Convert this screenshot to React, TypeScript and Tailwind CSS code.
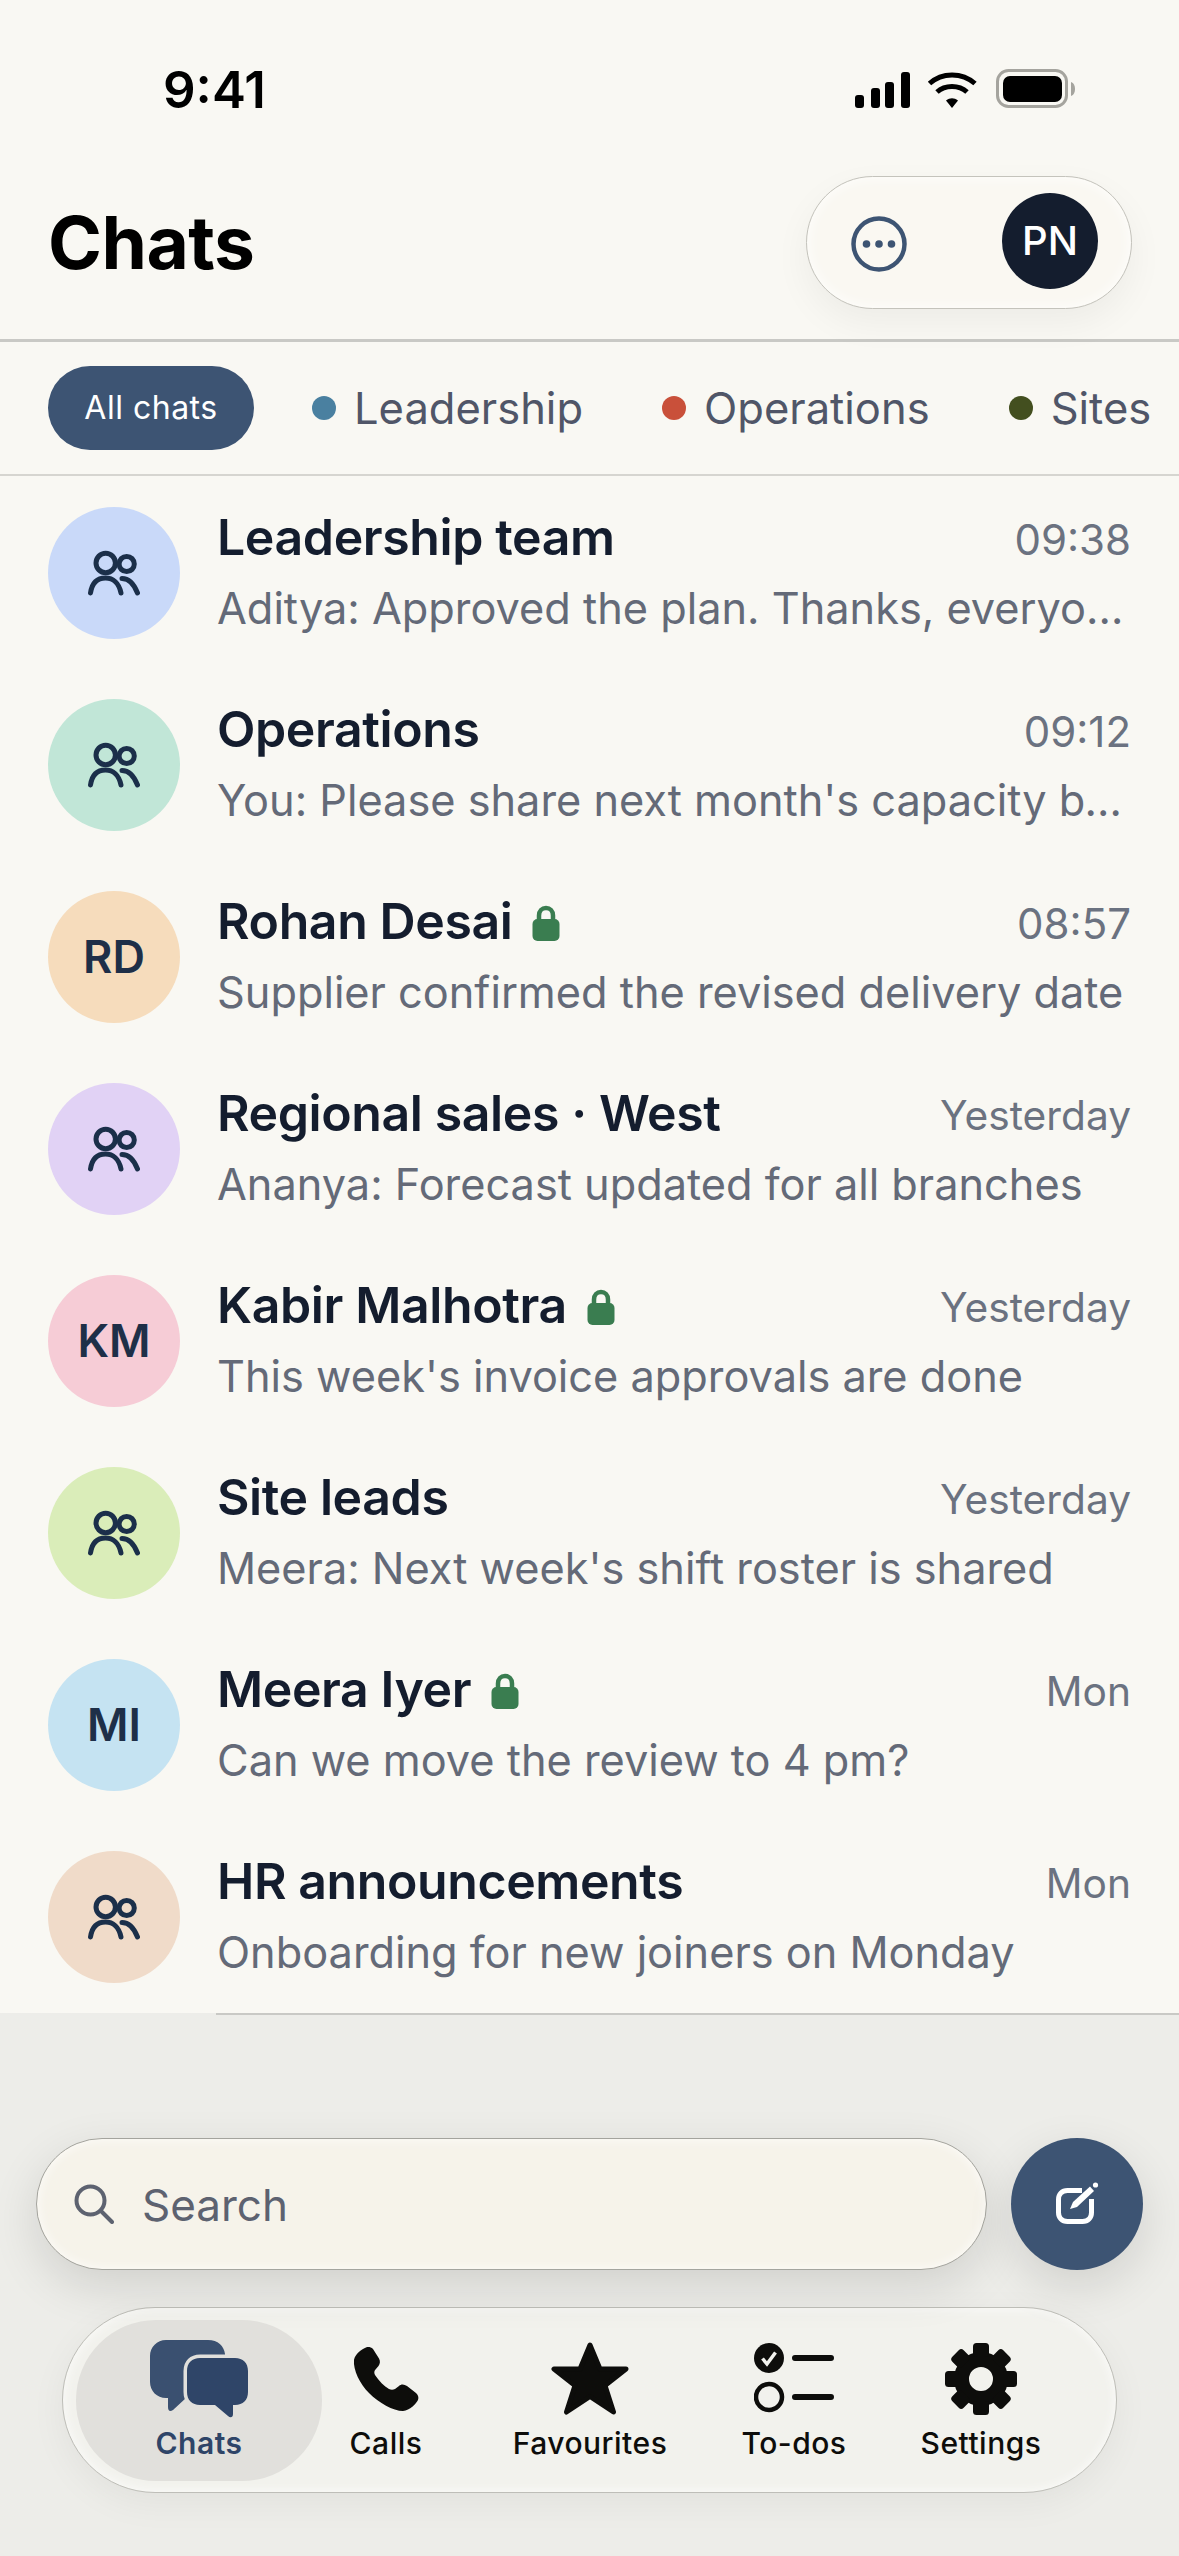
const peopleIcon = (
  <svg width="52" height="46" viewBox="1 1 52 46" fill="none" stroke="#1b2f4a" strokeWidth="5" strokeLinecap="round">
    <circle cx="18.7" cy="14" r="9.7" />
    <circle cx="39.7" cy="15" r="7.6" />
    <path d="M3.5 44C5 34 10 29 18.5 29C26 29 32 34 34 44" />
    <path d="M35 29.5C42 29.5 47 35 50.5 44" />
  </svg>
);

const chats = [
  { name: 'Leadership team', sub: 'Aditya: Approved the plan. Thanks, everyone for the update', time: '09:38', bg: 'bg-[#c9d9f9]' },
  { name: 'Operations', sub: "You: Please share next month's capacity by Friday please", time: '09:12', bg: 'bg-[#c1e6d7]' },
  { name: 'Rohan Desai', sub: 'Supplier confirmed the revised delivery date', time: '08:57', bg: 'bg-[#f6dcbc]', initials: 'RD', lock: true },
  { name: 'Regional sales · West', sub: 'Ananya: Forecast updated for all branches', time: 'Yesterday', bg: 'bg-[#e1d2f5]' },
  { name: 'Kabir Malhotra', sub: "This week's invoice approvals are done", time: 'Yesterday', bg: 'bg-[#f6ccd6]', initials: 'KM', lock: true },
  { name: 'Site leads', sub: "Meera: Next week's shift roster is shared", time: 'Yesterday', bg: 'bg-[#daedb9]' },
  { name: 'Meera Iyer', sub: 'Can we move the review to 4 pm?', time: 'Mon', bg: 'bg-[#c5e3f2]', initials: 'MI', lock: true },
  { name: 'HR announcements', sub: 'Onboarding for new joiners on Monday', time: 'Mon', bg: 'bg-[#f0dbc9]' },
];

const filters = [
  { label: 'Leadership', dot: 'bg-[#4a80a0]', cls: 'ml-[58px]' },
  { label: 'Operations', dot: 'bg-[#c9503a]', cls: 'ml-[79px]' },
  { label: 'Sites', dot: 'bg-[#434f1f]', cls: 'ml-[79px]' },
];

function StatusIcons() {
  return (
    <svg width="222" height="40" viewBox="0 0 222 40" className="mt-[3px] block overflow-visible">
      <rect x="0" y="23" width="9" height="13" rx="3" fill="#000" />
      <rect x="16" y="16" width="9" height="20" rx="3" fill="#000" />
      <rect x="30" y="10" width="9" height="26" rx="3" fill="#000" />
      <rect x="46" y="0" width="9" height="36" rx="3" fill="#000" />
      <path d="M74.5 11.5C87 0 107 0 120 11.5" fill="none" stroke="#000" strokeWidth="5" />
      <path d="M82 20C90 12.5 104 12.5 112 20" fill="none" stroke="#000" strokeWidth="5" />
      <path d="M91 28.5C95 25.5 99 25.5 103 28.5L97 36Z" fill="#000" />
      <rect x="142.5" y="-1.5" width="69" height="36" rx="11" fill="none" stroke="#a5a49e" strokeWidth="3" />
      <rect x="148" y="4" width="59" height="26" rx="7" fill="#000" />
      <path d="M216 10C219 11 220 14 220 17C220 20 219 23 216 24Z" fill="#a5a49e" />
    </svg>
  );
}

function LockIcon() {
  return (
    <svg width="28" height="36" viewBox="0 0 28 36" className="ml-[20px] mt-[4px] shrink-0">
      <path d="M7 17V10.5C7 6 10 3 14 3C18 3 21 6 21 10.5V17" fill="none" stroke="#3a7d50" strokeWidth="4.5" />
      <rect x="0.5" y="14" width="27" height="22" rx="5" fill="#3a7d50" />
    </svg>
  );
}

function ChatRow({ chat }: { chat: (typeof chats)[number] }) {
  return (
    <div className="flex h-[192px] items-center px-[48px]">
      <div className={`flex h-[132px] w-[132px] shrink-0 items-center justify-center rounded-full ${chat.bg}`}>
        {chat.initials ? (
          <span className="text-[45px] font-semibold text-[#1e2f48]">{chat.initials}</span>
        ) : (
          peopleIcon
        )}
      </div>
      <div className="ml-[37px] min-w-0 flex-1">
        <div className="flex h-[70px] items-center justify-between">
          <div className="mb-[2px] flex items-center">
            <span className="text-[50px] font-semibold tracking-[-0.4px] text-[#141d2e]">{chat.name}</span>
            {chat.lock && <LockIcon />}
          </div>
          <span className={chat.time.includes(':') ? 'mt-[3px] text-[42px] text-[#6b7280]' : 'mt-[3px] text-[40.7px] text-[#6b7280]'}>{chat.time}</span>
        </div>
        <div className="h-[70px] truncate text-[43.3px] leading-[70px] text-[#646a78]">{chat.sub}</div>
      </div>
    </div>
  );
}

function PhoneIcon() {
  return (
    <svg width="66" height="66" viewBox="0 0 66 66">
      <path
        d="M13 1.5C9 3 2 8 1 14C0 24 7 38 16 47C26 57 40 65 50 65C57 64 63 58 65 54C66 51 65 49 63 47L54 40C51 38 48 38 46 40L42 43C40 44 38 44 36 43C31 40 26 35 22 29C21 27 21 25 22.5 23.5L25.5 20C27 18 27.5 15 26 12.5L20 3C18 1 15 0.5 13 1.5Z"
        fill="#0d0d0b"
      />
    </svg>
  );
}

function GearIcon() {
  const teeth = [0, 45, 90, 135, 180, 225, 270, 315];
  return (
    <svg width="72" height="72" viewBox="0 0 72 72">
      <circle cx="36" cy="36" r="19.5" fill="none" stroke="#0d0d0b" strokeWidth="15" />
      {teeth.map((deg) => (
        <rect key={deg} x="28" y="0" width="16" height="14" rx="3.5" fill="#0d0d0b" transform={`rotate(${deg} 36 36)`} />
      ))}
    </svg>
  );
}

function TodoIcon() {
  return (
    <svg width="80" height="72" viewBox="0 0 80 72" fill="none">
      <circle cx="15" cy="15" r="15" fill="#0d0d0b" />
      <path d="M8.5 15.5L13 21L21.5 9.5" stroke="#f2f2ed" strokeWidth="3.5" />
      <circle cx="15" cy="54" r="13" stroke="#0d0d0b" strokeWidth="4.5" />
      <path d="M41 15H77M41 54H77" stroke="#0d0d0b" strokeWidth="6" strokeLinecap="round" />
    </svg>
  );
}

function ChatsIcon() {
  return (
    <svg width="98" height="78" viewBox="0 0 98 78" className="overflow-visible">
      <path
        d="M16 0H58C68 0 74 6 75 14V45C75 53 68 58 60 58H36L23 70C20 72 18 71 18 67V58H16C7 58 0 51 0 42V16C0 7 7 0 16 0Z"
        fill="#3a5070"
      />
      <path
        d="M50 18H85C93 18 98 23 98 31V52C98 60 93 65 85 65H83V74C83 78 80 78 78 76L65 65H50C42 65 37 60 37 52V31C37 23 42 18 50 18Z"
        fill="#2f4568"
        stroke="#e1e0dc"
        strokeWidth="7"
        paintOrder="stroke"
      />
    </svg>
  );
}

function StarIcon() {
  return (
    <svg width="78" height="74" viewBox="0 0 78 74">
      <path
        d="M39 3L49 27H75L54 43.5L62.5 70L39 54.5L15.5 70L24 43.5L3 27H29Z"
        fill="#0d0d0b"
        stroke="#0d0d0b"
        strokeWidth="5"
        strokeLinejoin="round"
      />
    </svg>
  );
}

const navItems = [
  { label: 'Calls', icon: <PhoneIcon />, width: 'w-[128px]' },
  { label: 'Favourites', icon: <StarIcon />, width: 'w-[280px]' },
  { label: 'To-dos', icon: <TodoIcon />, width: 'w-[128px]' },
  { label: 'Settings', icon: <GearIcon />, width: 'w-[246px]' },
];

export default function App() {
  return (
    <div className="flex h-[2556px] w-[1179px] flex-col overflow-hidden bg-[#f9f8f3] font-['Inter',sans-serif]">
      {/* Status bar */}
      <div className="flex h-[176px] shrink-0 items-center justify-between pl-[163px] pr-[102px] pt-[5px]">
        <span className="text-[51px] font-semibold text-black">9:41</span>
        <StatusIcons />
      </div>

      {/* Title */}
      <div className="flex h-[166px] shrink-0 items-start justify-between border-b-[3px] border-[#c9c9c5] pl-[48px] pr-[47px]">
        <h1 className="mt-[23px] text-[73px] leading-[88px] font-bold tracking-[-0.5px] text-black">Chats</h1>
        <div className="flex h-[133px] w-[326px] items-center justify-between rounded-full border border-[#c4c3bc] bg-[#faf8f2] pl-[44px] pr-[33px] shadow-[0_14px_36px_rgba(0,0,0,0.05),inset_0_0_14px_rgba(255,255,255,0.9)]">
          <svg width="56" height="56" viewBox="0 0 56 56" fill="none" className="mt-[2px]">
            <circle cx="28" cy="28" r="25.5" stroke="#3d5473" strokeWidth="4.5" />
            <circle cx="15.5" cy="28" r="3.8" fill="#3d5473" />
            <circle cx="28" cy="28" r="3.8" fill="#3d5473" />
            <circle cx="40.5" cy="28" r="3.8" fill="#3d5473" />
          </svg>
          <div className="mb-[4px] flex h-[96px] w-[96px] items-center justify-center rounded-full bg-[#141d2e] text-[40px] font-medium text-white">PN</div>
        </div>
      </div>

      {/* Filters */}
      <div className="flex h-[134px] shrink-0 items-start overflow-hidden border-b-2 border-[#d6d5d0] pl-[48px] pt-[24px]">
        <div className="flex h-[84px] w-[206px] shrink-0 items-center justify-center rounded-[42px] bg-[#3d5473] text-[32px] tracking-[0.5px] text-white">All chats</div>
        {filters.map((f) => (
          <div key={f.label} className={`flex h-[84px] shrink-0 items-center ${f.cls}`}>
            <span className={`h-[24px] w-[24px] rounded-full ${f.dot}`} />
            <span className="ml-[18px] mt-[2px] text-[43.5px] text-[#505668]">{f.label}</span>
          </div>
        ))}
      </div>

      {/* Chat list */}
      <div className="shrink-0 pt-px">
        {chats.map((chat) => (
          <ChatRow key={chat.name} chat={chat} />
        ))}
      </div>

      {/* Bottom area */}
      <div className="flex-1 bg-[#edede9]">
        <div className="ml-[216px] h-[2px] bg-[#c9c9c5]" />
        <div className="mt-[123px] flex gap-[24px] px-[36px]">
          <div className="flex h-[132px] flex-1 items-center rounded-full border-[1.5px] border-[#a4a49e] bg-[#f6f3ea] pl-[37px] shadow-[0_16px_48px_rgba(0,0,0,0.12),inset_0_0_12px_rgba(255,255,255,0.8)]">
            <svg width="40" height="40" viewBox="0 0 40 40" fill="none" stroke="#5d6270" strokeWidth="4" strokeLinecap="round">
              <circle cx="16.5" cy="16.5" r="14" />
              <path d="M27 27L38 38" />
            </svg>
            <span className="ml-[28px] pt-[2px] text-[44px] text-[#5d6270]">Search</span>
          </div>
          <div className="flex h-[132px] w-[132px] items-center justify-center rounded-full bg-[#3d5473] shadow-[0_16px_48px_rgba(0,0,0,0.12)]">
            <svg width="48" height="48" viewBox="0 0 48 48" fill="none">
              <path
                d="M29 10.5H14.5C9 10.5 5.5 14 5.5 19.5V32.5C5.5 38 9 41.5 14.5 41.5H29.5C35 41.5 38.5 38 38.5 32.5V19"
                stroke="#ffffff"
                strokeWidth="5"
              />
              <path d="M17 29L20 22L37 6.5L41 11L24 27Z" fill="#ffffff" />
              <circle cx="42.5" cy="5" r="2.6" fill="#ffffff" />
            </svg>
          </div>
        </div>

        <div className="mx-[62px] mt-[37px] flex h-[186px] items-center rounded-full border-[1.5px] border-[#bebeb8] bg-[#f2f2ed] pl-[13px] shadow-[0_10px_36px_rgba(0,0,0,0.05),inset_0_0_12px_rgba(255,255,255,0.8)]">
          <div className="flex h-[161px] w-[246px] shrink-0 flex-col items-center rounded-[80px] bg-[#e1e0dc] pt-[19px]">
            <div className="flex h-[80px] items-center">
              <ChatsIcon />
            </div>
            <span className="mt-[2px] text-[30px] leading-[44px] font-semibold tracking-[0.5px] text-[#2f4568]">Chats</span>
          </div>
          {navItems.map((item) => (
            <div key={item.label} className={`flex h-[161px] shrink-0 flex-col items-center pt-[19px] ${item.width}`}>
              <div className="flex h-[80px] items-center">{item.icon}</div>
              <span className="mt-[2px] text-[30px] leading-[44px] font-medium tracking-[0.5px] text-[#0d0d0b]">{item.label}</span>
            </div>
          ))}
        </div>
      </div>
    </div>
  );
}
